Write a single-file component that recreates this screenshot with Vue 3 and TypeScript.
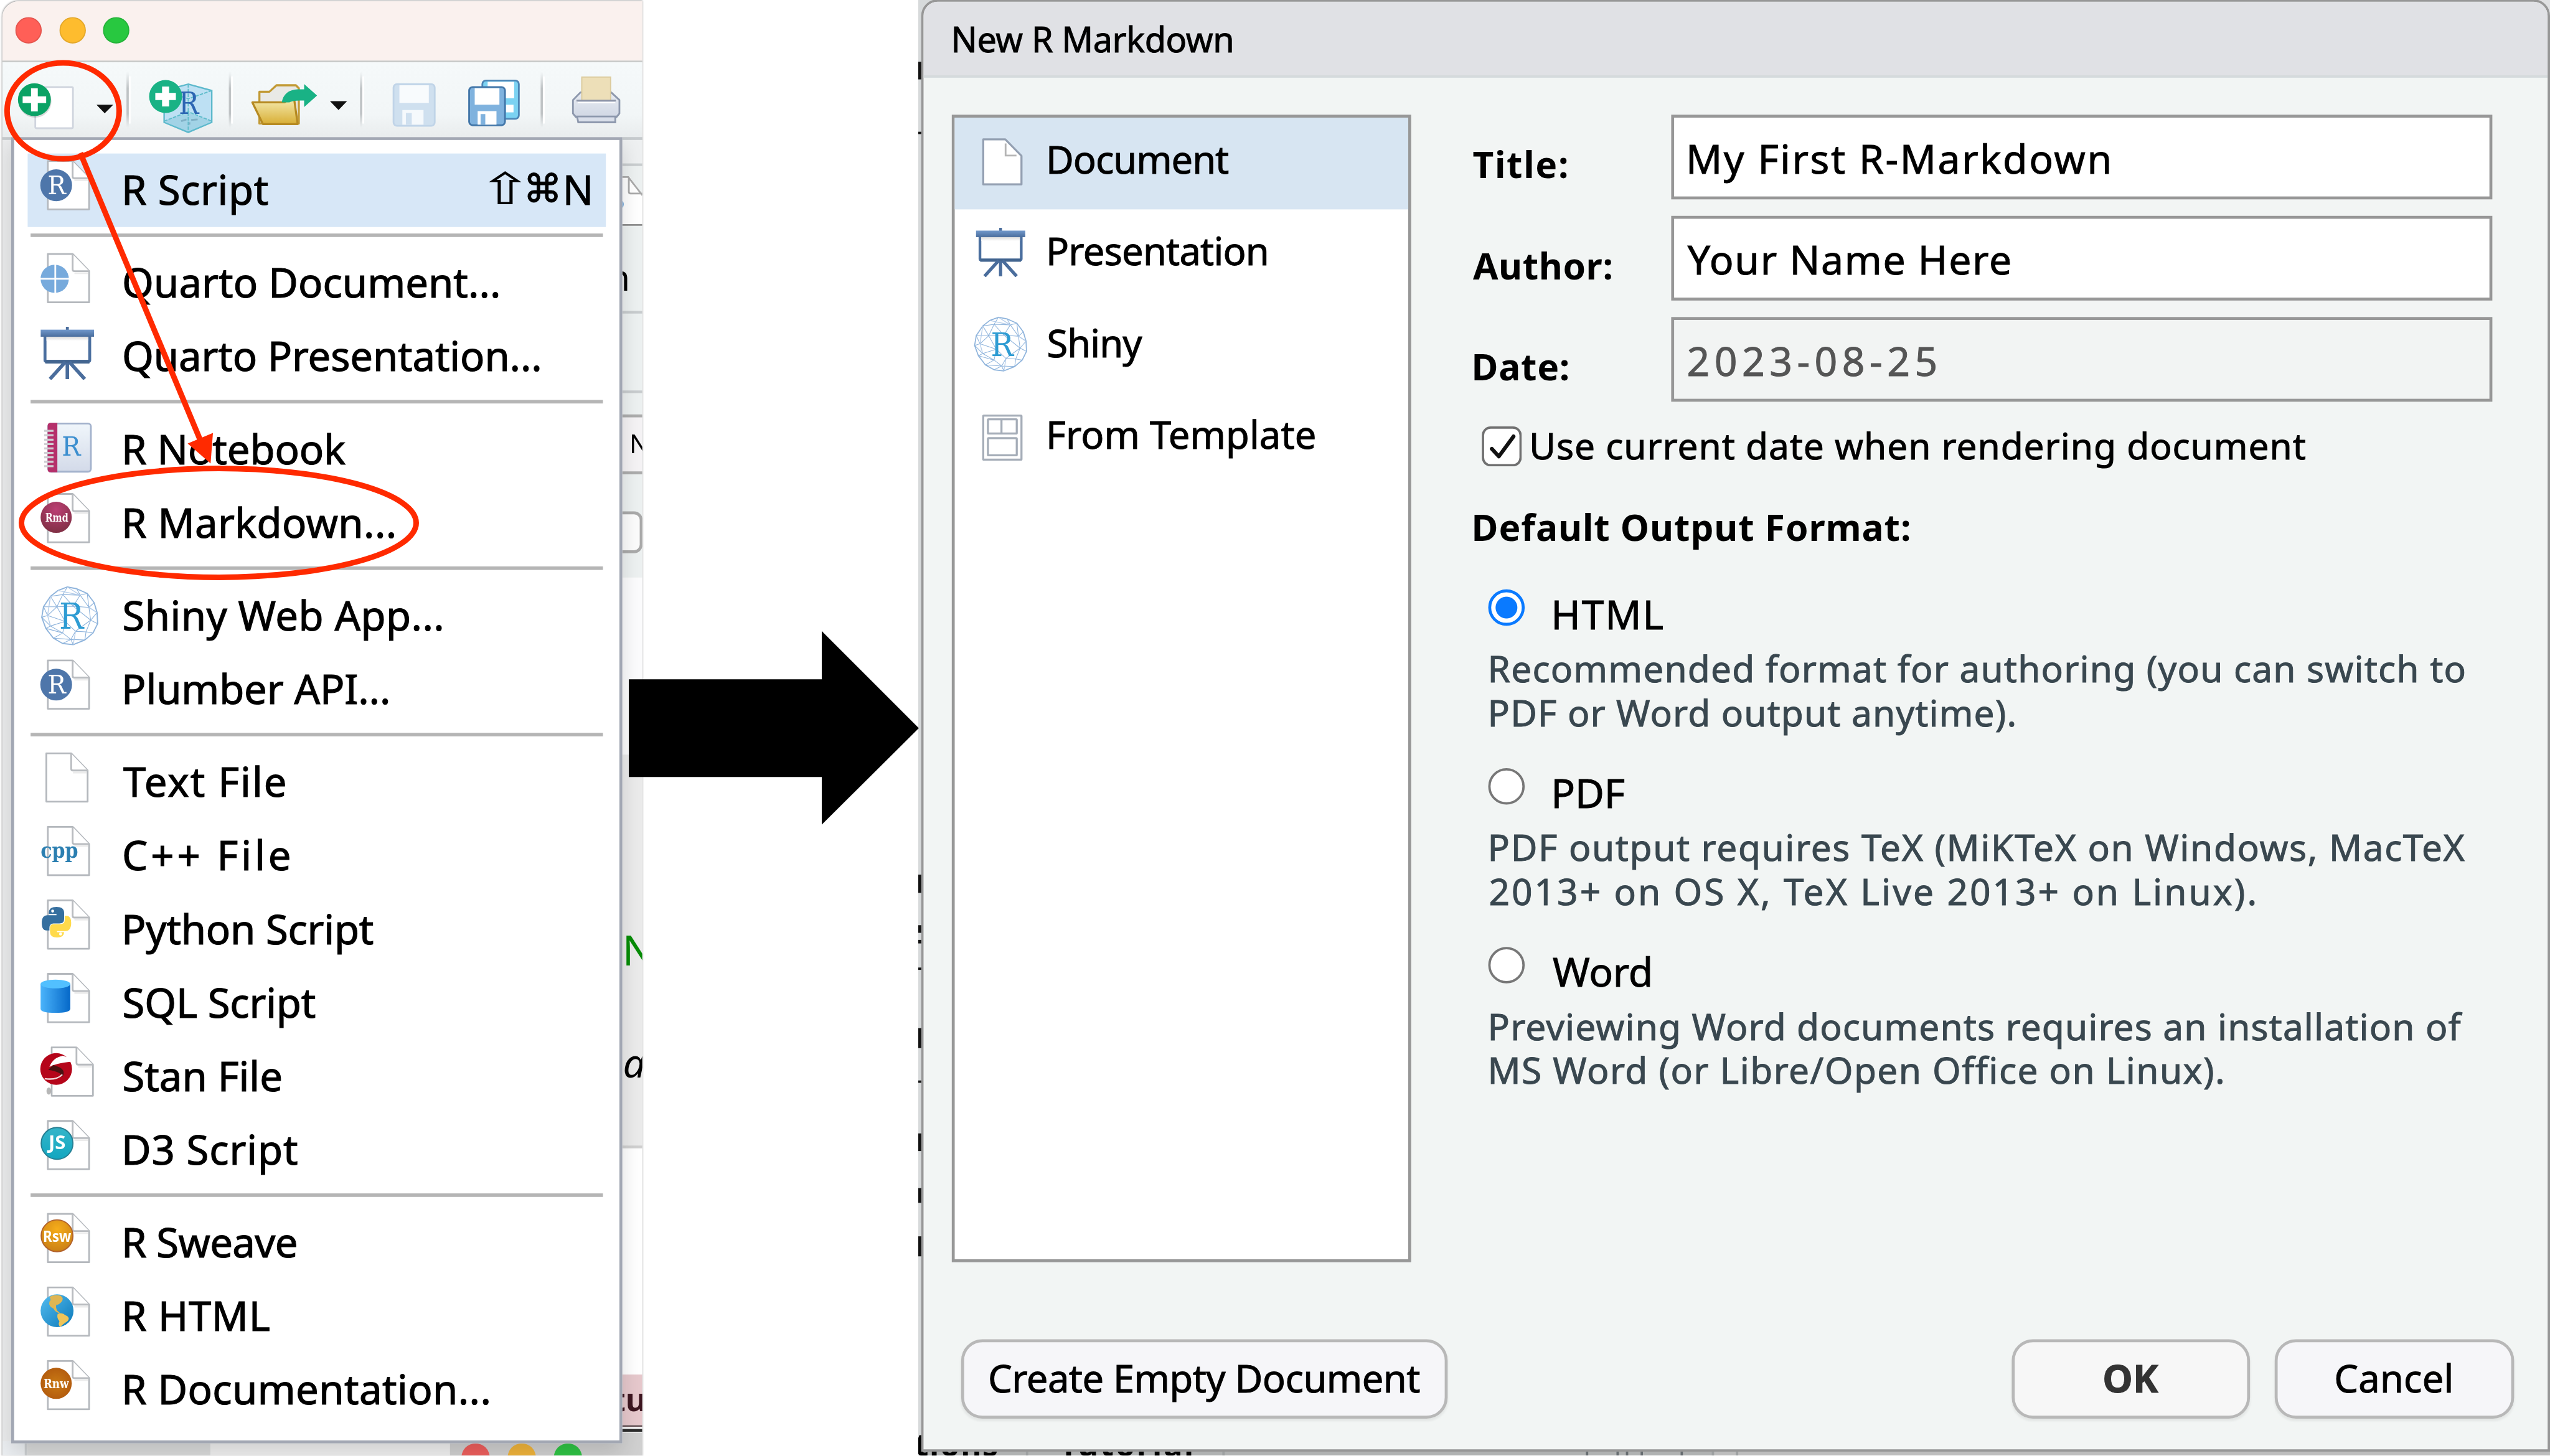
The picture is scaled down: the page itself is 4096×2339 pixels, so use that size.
<script setup lang="ts">
import type { Directive } from 'vue'

interface MenuItem {
  label: string
  icon: string
  ink: number
  keys?: boolean
}

// Spreads the letters of a label so that its visible ink spans the given width.
const vFit: Directive<HTMLElement, number> = {
  mounted(el, { value }) {
    const ctx = document.createElement('canvas').getContext('2d')
    const text = (el.textContent ?? '').trim()
    if (!ctx || text.length < 2) return
    const cs = getComputedStyle(el)
    ctx.font = `${cs.fontWeight} ${cs.fontSize} ${cs.fontFamily}`
    const m = ctx.measureText(text)
    const natural = m.actualBoundingBoxLeft + m.actualBoundingBoxRight
    el.style.letterSpacing = `${(value - natural) / (text.length - 1)}px`
    el.style.textIndent = `${m.actualBoundingBoxLeft / 2}px`
  },
}

const groups: MenuItem[][] = [
  [{ label: 'R Script', icon: 'r', ink: 243, keys: true }],
  [
    { label: 'Quarto Document...', icon: 'quarto', ink: 635.5 },
    { label: 'Quarto Presentation...', icon: 'easel', ink: 705.5 },
  ],
  [
    { label: 'R Notebook', icon: 'notebook', ink: 375 },
    { label: 'R Markdown...', icon: 'rmd', ink: 457.5 },
  ],
  [
    { label: 'Shiny Web App...', icon: 'shiny', ink: 540 },
    { label: 'Plumber API...', icon: 'r', ink: 447 },
  ],
  [
    { label: 'Text File', icon: 'text', ink: 275 },
    { label: 'C++ File', icon: 'cpp', ink: 280.5 },
    { label: 'Python Script', icon: 'python', ink: 422 },
    { label: 'SQL Script', icon: 'sql', ink: 325 },
    { label: 'Stan File', icon: 'stan', ink: 266.5 },
    { label: 'D3 Script', icon: 'd3', ink: 293 },
  ],
  [
    { label: 'R Sweave', icon: 'rsw', ink: 291 },
    { label: 'R HTML', icon: 'html', ink: 245.5 },
    { label: 'R Documentation...', icon: 'rnw', ink: 618 },
  ],
]

const templates = [
  { label: 'Document', icon: 'doc', ink: 305 },
  { label: 'Presentation', icon: 'easel', ink: 368.5 },
  { label: 'Shiny', icon: 'shiny', ink: 160 },
  { label: 'From Template', icon: 'tpl', ink: 451 },
]

const fields = [
  { label: 'Title:', ink: 159.5, value: 'My First R-Markdown', valueInk: 713, off: false },
  { label: 'Author:', ink: 235.6, value: 'Your Name Here', valueInk: 547.5, off: false },
  { label: 'Date:', ink: 159.5, value: '2023-08-25', valueInk: 420.5, off: true },
]

const formats = [
  {
    label: 'HTML', ink: 184, on: true,
    lines: [
      { t: 'Recommended format for authoring (you can switch to', w: 1654.5 },
      { t: 'PDF or Word output anytime).', w: 889.5 },
    ],
  },
  {
    label: 'PDF', ink: 118.5, on: false,
    lines: [
      { t: 'PDF output requires TeX (MiKTeX on Windows, MacTeX', w: 1655.6 },
      { t: '2013+ on OS X, TeX Live 2013+ on Linux).', w: 1300 },
    ],
  },
  {
    label: 'Word', ink: 166, on: false,
    lines: [
      { t: 'Previewing Word documents requires an installation of', w: 1651 },
      { t: 'MS Word (or Libre/Open Office on Linux).', w: 1243.5 },
    ],
  },
]

// Fragments of the window that peeks out left of the dialog: [y, height]
const peeks = [[105, 30], [224, 4], [1487, 31], [1573, 13], [1598, 6], [1645, 4], [1748, 34], [1837, 4], [1927, 30], [2020, 25], [2102, 34], [2448, 6]]
</script>

<template>
  <div class="viewport">
    <div class="canvas">
      <svg class="defs" width="0" height="0">
        <defs>
          <linearGradient id="gBar" x1="0" y1="0" x2="0" y2="1"><stop offset="0" stop-color="#7299cc" /><stop offset="1" stop-color="#4a6d9c" /></linearGradient>
          <linearGradient id="gGold" x1="0" y1="0" x2="0" y2="1"><stop offset="0" stop-color="#f5ebb0" /><stop offset="1" stop-color="#d8ae35" /></linearGradient>
          <linearGradient id="gSql" x1="0" y1="0" x2="1" y2="0"><stop offset="0" stop-color="#4bb4fb" /><stop offset="1" stop-color="#0568c8" /></linearGradient>
          <linearGradient id="gBook" x1="0" y1="0" x2="0" y2="1"><stop offset="0" stop-color="#f0f6fb" /><stop offset="1" stop-color="#d3dae9" /></linearGradient>
          <linearGradient id="gPrn" x1="0" y1="0" x2="0" y2="1"><stop offset="0" stop-color="#e8ecf2" /><stop offset="1" stop-color="#d0d7e4" /></linearGradient>
          <linearGradient id="gShade" x1="0" y1="0" x2="0" y2="1"><stop offset="0" stop-color="#d5d5d5" /><stop offset="1" stop-color="#fff" /></linearGradient>
          <linearGradient id="gSep" x1="0" y1="0" x2="0" y2="1"><stop offset="0" stop-color="#c3c7c9" stop-opacity="0" /><stop offset=".3" stop-color="#bfc3c5" /><stop offset=".75" stop-color="#bfc3c5" /><stop offset="1" stop-color="#c3c7c9" stop-opacity="0" /></linearGradient>
          <radialGradient id="gRmd" cx=".5" cy=".25" r=".8"><stop offset="0" stop-color="#bb3f74" /><stop offset="1" stop-color="#7c2e41" /></radialGradient>
          <radialGradient id="gRsw" cx=".5" cy=".3" r=".75"><stop offset="0" stop-color="#f6ad1b" /><stop offset="1" stop-color="#c87d14" /></radialGradient>
          <radialGradient id="gRnw" cx=".5" cy=".5" r=".55"><stop offset="0" stop-color="#c97a14" /><stop offset="1" stop-color="#b25a0e" /></radialGradient>
          <linearGradient id="gJs" x1="0" y1="0" x2="0" y2="1"><stop offset="0" stop-color="#35b5c9" /><stop offset="1" stop-color="#12a6c0" /></linearGradient>
          <linearGradient id="gGlobe" x1="0" y1="0" x2="1" y2="1"><stop offset="0" stop-color="#55bdf0" /><stop offset="1" stop-color="#0b78b8" /></linearGradient>
        </defs>
        <symbol id="page" viewBox="0 0 74 86">
          <path d="M1.8 1.8H44L72 31V84H1.8Z" fill="#fff" stroke="#b4b8bd" stroke-width="3" stroke-linejoin="round" />
          <path d="M44 2V28Q44 31 47 31H72" fill="#fff" stroke="#b9bcc0" stroke-width="3" />
          <path d="M47 34.5H70" stroke="#ececec" stroke-width="3" />
        </symbol>
        <symbol id="easel" viewBox="0 0 91 90">
          <path d="M45.5 0V8" stroke="#4a6d9c" stroke-width="5" />
          <rect x="7.500" y="12" width="76" height="47" rx="2" fill="#fff" stroke="#4b6f9f" stroke-width="5" />
          <rect x="10" y="16" width="71" height="8" fill="url(#gShade)" />
          <rect x="0" y="5" width="91" height="12" fill="url(#gBar)" />
          <path d="M8 59.500H83" stroke="#43658f" stroke-width="6" />
          <path d="M45.500 61V89M42 60L16 89M49 60L75 89" stroke="#4a6d9c" stroke-width="6" fill="none" />
        </symbol>
        <symbol id="shiny" viewBox="0 0 100 101">
          <g fill="none" stroke="#8fb4dc" stroke-width="1.200" stroke-linejoin="round">
            <path d="M46 1L62 4L80 12L92 28L97 45L98 64L90 80L76 92L56 100L38 98L22 89L9 72L2 53L5 35L17 17L30 7Z" stroke-width="2" />
            <path d="M46 1L38 14L17 17L28 35L5 35L12 50L2 53L17 68L9 72L38 80L22 89L52 91L38 98M38 14L68 15L62 4M68 15L80 12L83 36L92 28M83 36L97 45L86 58L98 64M86 58L78 78L90 80M78 78L76 92L52 91L56 100M38 80L52 91L60 77L78 78M17 68L38 80L42 60L12 50L28 35L38 14L56 34L68 15L83 36L56 34L28 35L42 60M56 34L86 58L60 77L42 60M17 68L42 60M83 36L86 58" />
          </g>
          <g fill="none" stroke="#b5cdea" stroke-width="1.500"><path d="M30 7L68 15M46 1L68 15M17 17L12 50L17 68M60 77L56 100M97 45L83 36" /></g>
          <text x="53" y="73" text-anchor="middle" class="slab" font-size="61" textLength="42" lengthAdjust="spacingAndGlyphs" fill="#2e9cd3">R</text>
        </symbol>
      </svg>

      <!-- IDE window -->
      <section class="ide">
        <header class="titlebar"><i class="dot red" /><i class="dot amber" /><i class="dot green" /></header>
        <div class="toolbar">
          <svg width="1088" height="127" viewBox="4 106 1088 127">
            <g fill="url(#gSep)">
              <rect x="215" y="122" width="4" height="95" /><rect x="389" y="122" width="4" height="95" />
              <rect x="612" y="122" width="4" height="95" /><rect x="919" y="122" width="4" height="95" />
            </g>
            <path d="M220.500 130V210M394.500 130V210M617.500 130V210M924.500 130V210" stroke="#fff" stroke-width="3" />
            <rect x="60" y="148" width="64" height="70" rx="2" fill="#fff" stroke="#d0d5de" stroke-width="3" />
            <circle cx="59.500" cy="172" r="28" fill="#000" opacity=".15" />
            <circle cx="58.500" cy="169.500" r="28" fill="#0aa265" />
            <path d="M58.500 150V189.500M38.500 169.500H78.500" stroke="#fff" stroke-width="11.500" />
            <path d="M164 178H192.500L178 192.500ZM561 172H590L575.500 187Z" fill="#111" />
            <path d="M320 143L360 154V208L320 225L279 208V154Z" fill="#bde0f3" />
            <path d="M320 191L360 206L320 225L279 206Z" fill="#a2d3e6" />
            <path d="M320 143L360 154V208L320 225L279 208V154Z" fill="none" stroke="#5db9cc" stroke-width="2.500" />
            <path d="M320 143V225M279 154L320 168L360 154M279 206L320 190L360 206" stroke="#5fbccb" stroke-width="2" fill="none" stroke-dasharray="6 2" />
            <text x="321" y="194" text-anchor="middle" class="slab" font-size="52" textLength="34" lengthAdjust="spacingAndGlyphs" fill="#2d66b3">R</text>
            <path d="M308 206L317 203M325 204L336 203M322 208V212" stroke="#7fb0c6" stroke-width="3" />
            <circle cx="281.500" cy="164" r="28" fill="#19b285" />
            <path d="M281.500 147V181M264 164H299" stroke="#fff" stroke-width="12" />
            <path d="M441 180V156H458L470 145H503L508 150V210H441Z" fill="#e9e9e6" stroke="#c29a35" stroke-width="3.500" stroke-linejoin="round" />
            <path d="M429 174H484L490 168H500L506 211H447Z" fill="url(#gGold)" stroke="#b68a22" stroke-width="3.500" stroke-linejoin="round" />
            <path d="M479 174Q483 153 506 152H517V143L539 162.500L517 182V171Q498 170 492 174Z" fill="#19b285" />
            <g>
              <rect x="669" y="143" width="70" height="71" rx="6" fill="#cfe0ef" stroke="#c0d4e8" stroke-width="3" />
              <rect x="679" y="145" width="50" height="30" fill="#f8fbfd" />
              <path d="M684 187H720V212H684Z" fill="#f5f9fc" /><path d="M690 192H700V212H690Z" fill="#cfe0ef" />
            </g>
            <rect x="820" y="137" width="62" height="65" rx="6" fill="#7bd2f2" stroke="#4c86b6" stroke-width="3" />
            <rect x="829" y="139" width="45" height="28" fill="#fff" /><path d="M860 178H873V191H860Z" fill="#fff" />
            <rect x="797.500" y="148" width="61" height="65" rx="6" fill="#7fb2de" stroke="#4377a9" stroke-width="3" />
            <rect x="807" y="150" width="42" height="28" fill="#fff" />
            <path d="M812 189H844V212H812Z" fill="#fff" /><path d="M817 194H825V212H817Z" fill="#7fb2de" />
            <path d="M987 157H1039L1053 170V193L1048 199H979L974 193V170Z" fill="url(#gPrn)" stroke="#8d98ad" stroke-width="3" stroke-linejoin="round" />
            <rect x="989" y="131" width="49" height="40" fill="#eddfb8" stroke="#dccb9c" stroke-width="2" />
            <path d="M980 171H1047" stroke="#8b93a6" stroke-width="3" /><path d="M982 174.500H1046" stroke="#fff" stroke-width="2" />
            <path d="M981 198H1046V208H983Z" fill="#d9dfea" stroke="#8d98ad" stroke-width="3" />
          </svg>
        </div>
        <div class="behind">
          <svg width="1088" height="2237" viewBox="4 238 1088 2237">
            <rect x="4" y="238" width="1088" height="2237" fill="#fff" />
            <rect x="4" y="238" width="38" height="2237" fill="#ebeced" />
            <rect x="1050" y="238" width="42" height="40" fill="#eef0f1" />
            <rect x="1050" y="278" width="42" height="704" fill="#edf1f1" />
            <path d="M1050 280H1092M1050 531H1092M1050 666H1092" stroke="#c9cdcf" stroke-width="4.500" />
            <path d="M1050 300H1070L1092 330V382H1050Z" fill="#fff" />
            <path d="M1050 301H1068L1092 332M1069 301V326Q1069 329 1072 329H1092" stroke="#aaa" stroke-width="3" fill="none" />
            <path d="M1050 382.500H1092" stroke="#8e8e8e" stroke-width="3" />
            <path d="M1054 338Q1066 346 1056 356Z" fill="#7db0e0" />
            <rect x="1050" y="707" width="42" height="96" fill="#f5f3f5" />
            <path d="M1050 707H1092M1050 804H1092" stroke="#adadad" stroke-width="5" />
            <rect x="1040" y="872" width="50" height="66" rx="12" fill="#fcfcfc" stroke="#aaa" stroke-width="5" />
            <rect x="1050" y="982" width="42" height="301" fill="#fcfcfd" />
            <rect x="1050" y="1283" width="42" height="667" fill="#ebebeb" />
            <path d="M1050 1950H1092" stroke="#d0d0d0" stroke-width="5" />
            <text x="1033" y="494" class="ui" font-size="62">n</text>
            <text x="1070" y="771" class="ui" font-size="44">N</text>
            <text x="1058" y="1642" class="ui" font-size="71" fill="#078c07">N</text>
            <text x="1059" y="1832" class="ui it" font-size="68">a</text>
            <rect x="1050" y="2337" width="42" height="86" fill="#e6c8cc" />
            <text x="1040" y="2399" class="ui b" font-size="54" fill="#3d1620">tu</text>
            <path d="M1050 2424.500H1092" stroke="#685357" stroke-width="3" /><path d="M1050 2432H1092" stroke="#2c2c2c" stroke-width="5" />
            <rect x="4" y="2450" width="38" height="25" fill="#eceff2" />
            <path d="M44 2450V2475" stroke="#cdd0d2" stroke-width="4" />
            <rect x="46" y="2450" width="312" height="25" fill="#dadbdb" />
            <rect x="358" y="2450" width="408" height="25" fill="#f0f0f0" />
            <rect x="765" y="2436" width="327" height="39" fill="#d0d0d0" />
            <circle cx="808.500" cy="2478" r="24" fill="#ee5f5d" /><circle cx="887" cy="2478" r="24" fill="#f0b43c" /><circle cx="965.500" cy="2478" r="24" fill="#2fc445" />
          </svg>
        </div>
      </section>

      <!-- New file menu -->
      <nav class="menu">
        <div v-for="(g, gi) in groups" :key="gi" class="group">
          <div v-for="it in g" :key="it.label" class="item" :class="{ active: it.keys }">
            <svg width="110" height="125" viewBox="64 0 110 125">
              <use v-if="!['easel', 'notebook', 'shiny'].includes(it.icon)" href="#page" :x="it.icon === 'stan' ? 86 : it.icon === 'text' ? 77 : 79.5" y="11" width="74" height="86" />
              <g v-if="it.icon === 'r'">
                <circle cx="95.500" cy="54" r="27" fill="#4e76aa" />
                <text x="96.500" y="69" text-anchor="middle" class="slab" font-size="44" textLength="31" lengthAdjust="spacingAndGlyphs" fill="#fff">R</text>
              </g>
              <g v-else-if="it.icon === 'quarto'">
                <circle cx="93" cy="55" r="24" fill="#77aadc" /><path d="M94 30V80M68 55H118" stroke="#fff" stroke-width="3" />
              </g>
              <use v-else-if="it.icon === 'easel'" href="#easel" x="69" y="11.500" width="91" height="90" />
              <g v-else-if="it.icon === 'notebook'">
                <rect x="82" y="18" width="72.500" height="82" rx="5" fill="url(#gBook)" stroke="#a3b2cc" stroke-width="3" />
                <path d="M86 17H97.500V101H86Q81 101 81 96V22Q81 17 86 17Z" fill="#b5306b" />
                <path v-for="n in 9" :key="n" :d="`M75 ${23 + n * 7.5}H91`" stroke="#cfcdd2" stroke-width="3.500" />
                <text x="121" y="73" text-anchor="middle" class="slab" font-size="46" textLength="32" lengthAdjust="spacingAndGlyphs" fill="#3d8fcf">R</text>
              </g>
              <g v-else-if="it.icon === 'rmd'">
                <circle cx="95.500" cy="52.500" r="26.500" fill="url(#gRmd)" />
                <text x="96.500" y="60" text-anchor="middle" class="slab b" font-size="19" textLength="39" lengthAdjust="spacingAndGlyphs" fill="#fff">Rmd</text>
              </g>
              <use v-else-if="it.icon === 'shiny'" href="#shiny" x="69" y="11.500" width="99" height="101" />
              <text v-else-if="it.icon === 'cpp'" x="69" y="65" class="slab b" font-size="37" textLength="64" lengthAdjust="spacingAndGlyphs" fill="#2b7fb1">cpp</text>
              <g v-else-if="it.icon === 'python'">
                <path d="M83 34Q83 24 96 24Q109 24 109 34V45Q109 52 101 52H91Q84 52 84 60V64H79Q71 64 71 51Q71 38 81 38H96V36H83Z" fill="#356f9f" />
                <path d="M109 67Q109 76 97 76Q85 76 85 67V59Q85 53 92 53H103Q110 53 110 46V39H114Q121 40 121 51Q121 65 111 65H97V67Z" fill="#ffda4b" />
                <circle cx="89.500" cy="31" r="2.500" fill="#fff" /><circle cx="103" cy="70" r="2.500" fill="#fff" />
              </g>
              <g v-else-if="it.icon === 'sql'">
                <path d="M69 30V72Q69 79 94 79Q119.500 79 119.500 72V30Z" fill="url(#gSql)" />
                <ellipse cx="94.250" cy="30" rx="25.250" ry="7.500" fill="#52c0ff" />
              </g>
              <g v-else-if="it.icon === 'stan'">
                <ellipse cx="83" cy="87" rx="4" ry="6" fill="#999" opacity=".7" />
                <circle cx="95.500" cy="49.500" r="27" fill="#b5051a" />
                <path d="M107 27Q90 30 84 46Q94 40 121.500 37L116 30Z" fill="#fff" />
                <path d="M82 51Q104 54 106 63Q112 53 102 47Q94 43 90 43Z" fill="#4a1212" />
                <path d="M76 66Q96 69 106 59" stroke="#f3d9dc" stroke-width="2.500" fill="none" />
              </g>
              <g v-else-if="it.icon === 'd3'">
                <circle cx="97" cy="51" r="27" fill="url(#gJs)" stroke="#277f93" stroke-width="2" />
                <text x="97" y="61" text-anchor="middle" class="ui b" font-size="33" fill="#fff">JS</text>
              </g>
              <g v-else-if="it.icon === 'rsw'">
                <circle cx="97" cy="50" r="27" fill="url(#gRsw)" stroke="#b2622c" stroke-width="2" />
                <text x="97" y="60" text-anchor="middle" class="ui b" font-size="26" textLength="48" lengthAdjust="spacingAndGlyphs" fill="#fff">Rsw</text>
              </g>
              <g v-else-if="it.icon === 'html'">
                <circle cx="97" cy="52.500" r="28" fill="url(#gGlobe)" />
                <path d="M84 29Q92 24 103 27Q110 32 104 38Q99 43 96 42Q94 46 97 52Q100 55 103 57Q94 56 91 49Q82 45 84 37Q88 34 84 29Z" fill="#e0b653" />
                <path d="M98 58Q106 55 111 60Q121 64 114 71Q106 76 103 80Q98 78 101 70Q96 65 98 58Z" fill="#f0c458" />
              </g>
              <g v-else-if="it.icon === 'rnw'">
                <circle cx="95.500" cy="51" r="26.500" fill="url(#gRnw)" />
                <text x="95.500" y="59" text-anchor="middle" class="slab b" font-size="22" textLength="43" lengthAdjust="spacingAndGlyphs" fill="#fff">Rnw</text>
              </g>
            </svg>
            <span v-fit="it.ink" class="mlabel">{{ it.label }}</span>
            <span v-if="it.keys" class="keys"><span class="shift">⇧</span><span class="cmd">⌘</span><span>N</span></span>
          </div>
        </div>
      </nav>

      <!-- Window behind the dialog -->
      <svg class="under" width="2774" height="2475" viewBox="1561 0 2774 2475">
        <rect x="1561" y="0" width="30" height="2475" fill="#d7dadb" />
        <rect v-for="p in peeks" :key="p[0]" x="1561" :y="p[0]" width="8" :height="p[1]" fill="#111" />
        <rect x="4300" y="0" width="35" height="40" fill="#dfe0e2" />
        <rect x="1566" y="2440" width="1347" height="35" fill="#b0b2b2" />
        <rect x="2912" y="2440" width="1423" height="35" fill="#bdbdbd" />
        <path d="M1746 2460V2475M2080 2460V2475M2912 2460V2475M2953 2460V2475" stroke="#9da0a1" stroke-width="4" />
        <path d="M2698 2460V2475M2750 2460V2475M2766 2460V2475M2791 2460V2475M2859 2460V2475" stroke="#666c70" stroke-width="4" />
        <text x="1555" y="2476" class="ui b" font-size="54" textLength="142">tions</text>
        <text x="1801" y="2476" class="ui b" font-size="54" textLength="228">Tutorial</text>
      </svg>

      <!-- Dialog -->
      <section class="dialog">
        <header class="dhead"><span v-fit="472.5">New R Markdown</span></header>
        <div class="dbody">
          <ul class="list">
            <li v-for="(t, i) in templates" :key="t.label" :class="{ sel: i === 0 }">
              <svg width="100" height="156" viewBox="1650 0 100 156">
                <g v-if="t.icon === 'doc'">
                  <path d="M1671.500 37H1709L1736.500 65V113.500H1671.500Z" fill="#fff" stroke="#94a0b2" stroke-width="3.500" stroke-linejoin="round" />
                  <path d="M1709.500 44V64.500H1728" fill="none" stroke="#b5b5b5" stroke-width="3" />
                </g>
                <use v-else-if="t.icon === 'easel'" href="#easel" x="1659" y="31" width="84" height="84" />
                <use v-else-if="t.icon === 'shiny'" href="#shiny" x="1655" y="26" width="92" height="94" />
                <g v-else fill="none" stroke="#a5adb8" stroke-width="3.500">
                  <rect x="1671.500" y="38.500" width="65" height="75" rx="1" /><rect x="1679.500" y="45" width="49" height="24" rx="1" />
                  <path d="M1702.500 45V69" /><rect x="1679.500" y="77" width="49" height="29" rx="1" />
                </g>
              </svg>
              <span v-fit="t.ink">{{ t.label }}</span>
            </li>
          </ul>
          <div class="form">
            <div v-for="f in fields" :key="f.label" class="field">
              <label v-fit="f.ink">{{ f.label }}</label>
              <div class="input" :class="{ off: f.off }"><span v-fit="f.valueInk">{{ f.value }}</span></div>
            </div>
            <div class="check">
              <svg width="68" height="68" viewBox="0 0 68 68">
                <rect x="2" y="2" width="64" height="64" rx="13" fill="#fff" stroke="#707070" stroke-width="4" />
                <path d="M17 38L29 51L54 17" fill="none" stroke="#111" stroke-width="6.500" stroke-linecap="round" stroke-linejoin="round" />
              </svg>
              <span v-fit="1315">Use current date when rendering document</span>
            </div>
            <h2 v-fit="739.6">Default Output Format:</h2>
            <div v-for="o in formats" :key="o.label" class="option">
              <div class="radio-row">
                <i class="radio" :class="{ on: o.on }" />
                <span v-fit="o.ink">{{ o.label }}</span>
              </div>
              <p v-for="l in o.lines" :key="l.t"><span v-fit="l.w">{{ l.t }}</span></p>
            </div>
          </div>
        </div>
        <footer class="dfoot">
          <button class="create"><span v-fit="731.5">Create Empty Document</span></button>
          <button class="ok"><span v-fit="92.5">OK</span></button>
          <button class="cancel"><span v-fit="195.5">Cancel</span></button>
        </footer>
      </section>

      <!-- Annotations -->
      <svg class="notes" width="4335" height="2475" viewBox="0 0 4335 2475">
        <path d="M1069 1155H1397V1073L1562 1238L1397 1402V1321H1069Z" fill="#000" />
        <g fill="none" stroke="#ff2a00" stroke-width="9.500">
          <ellipse cx="107.300" cy="188.500" rx="95.300" ry="81.500" />
          <ellipse cx="372" cy="889" rx="335.500" ry="92.500" />
          <path d="M136.500 260L342 752" />
        </g>
        <path d="M319 754L362 736L358 788Z" fill="#ff2a00" />
      </svg>
    </div>
  </div>
</template>

<style>
body {
  margin: 0;
  overflow: hidden;
}
</style>

<style scoped>
.viewport {
  width: 4096px;
  height: 2339px;
  overflow: hidden;
  background: #fff;
}
.canvas {
  position: relative;
  width: 4335px;
  height: 2475px;
  transform: scale(0.94487);
  transform-origin: 0 0;
  overflow: hidden;
  font-family: "Noto Sans", "Open Sans", sans-serif;
  color: #000;
}
.canvas * {
  box-sizing: border-box;
}
svg {
  display: block;
  flex: none;
}
.defs {
  position: absolute;
}
.ui {
  font-family: "Noto Sans", sans-serif;
}
.slab {
  font-family: "DejaVu Serif", "Liberation Serif", serif;
}
.b {
  font-weight: 700;
}
.it {
  font-style: italic;
}
.ide {
  position: absolute;
  left: 4px;
  top: 2px;
  width: 1088px;
  height: 2473px;
  border-radius: 28px 0 0 0;
  overflow: hidden;
  box-shadow: 0 0 3px #999;
}
.titlebar {
  height: 104px;
  display: flex;
  align-items: center;
  gap: 29.500px;
  padding: 0 0 3px 22px;
  background: #faf1ee;
  border-bottom: 3px solid #c9cac9;
}
.dot {
  width: 45px;
  height: 45px;
  border-radius: 50%;
  border: 2px solid rgba(0, 0, 0, 0.1);
}
.red { background: #ff5f57; }
.amber { background: #febc2e; }
.green { background: #28c840; }
.toolbar {
  height: 132px;
  background: linear-gradient(#f5f9fa 0%, #f2f6f7 70%, #e9eced 100%);
  border-bottom: 5px solid #c6cacd;
}
.menu {
  position: absolute;
  left: 19px;
  top: 233px;
  width: 1039px;
  height: 2221px;
  padding: 23px;
  background: #fff;
  border: 5px solid #a2a7b3;
  box-shadow: 0 14px 34px rgba(0, 0, 0, 0.14);
  clip-path: inset(0 -34px -30px -15px);
  -webkit-text-stroke: 1.2px currentColor;
}
.menu svg {
  -webkit-text-stroke: 0;
}
.group + .group::before {
  content: "";
  display: block;
  height: 5.500px;
  margin: 11px 5px 16.500px;
  background: #b5b5b5;
}
.item {
  display: flex;
  align-items: center;
  height: 125px;
  padding-left: 17px;
}
.active {
  background: #d7e7f7;
}
.mlabel {
  margin-left: 35.500px;
  padding-bottom: 5px;
  font-size: 69px;
  white-space: nowrap;
}
.keys {
  display: flex;
  align-items: center;
  margin-left: auto;
  padding: 0 21px 5px 0;
  font-size: 69px;
}
.shift {
  font-family: "DejaVu Sans", sans-serif;
  font-size: 74px;
  transform: scaleX(1.5);
  -webkit-text-stroke: 0;
}
.cmd {
  font-family: "DejaVu Sans", sans-serif;
  font-size: 66px;
  margin-right: 1px;
}
.under {
  position: absolute;
  left: 1561px;
  top: 0;
}
.dialog {
  position: absolute;
  left: 1566px;
  top: -1px;
  width: 2769px;
  height: 2469px;
  border: 4px solid #979797;
  border-radius: 28px 28px 0 0;
  background: #f2f5f4;
  overflow: hidden;
  -webkit-text-stroke: 1px currentColor;
}
.dialog svg {
  -webkit-text-stroke: 0;
}
.dhead {
  display: flex;
  align-items: center;
  height: 129px;
  padding-left: 49px;
  background: #e0e1e5;
  border-bottom: 4px solid #d5dadc;
  font-size: 59px;
  white-space: nowrap;
}
.dbody {
  display: flex;
  padding: 62.500px 0 0 48px;
}
.list {
  flex: none;
  width: 781px;
  height: 1951.500px;
  margin: 0;
  padding: 0;
  list-style: none;
  background: #fff;
  border: 5px solid #979797;
}
.list li {
  display: flex;
  align-items: center;
  height: 156px;
  padding-left: 27px;
  font-size: 65px;
  white-space: nowrap;
}
.list li span {
  margin: -15px 0 0 31px;
}
.sel {
  background: #d7e5f2;
}
.form {
  width: 1733px;
  margin-left: 105px;
}
.field {
  display: flex;
  height: 144px;
  margin-bottom: 28px;
}
.field label {
  width: 337px;
  padding-top: 25px;
  line-height: 119px;
  font-size: 62px;
  font-weight: 700;
  -webkit-text-stroke: 0;
}
.input {
  flex: 1;
  display: flex;
  align-items: center;
  padding: 3px 0 0 23px;
  background: #fff;
  border: 5px solid #979797;
  font-size: 68px;
  white-space: nowrap;
}
.off {
  background: #f2f4f3;
  color: #555;
}
.check {
  display: flex;
  align-items: center;
  gap: 15.500px;
  height: 68px;
  margin-top: 42.500px;
  padding-left: 14.500px;
  font-size: 62px;
  white-space: nowrap;
}
.check span {
  margin-top: -5px;
}
h2 {
  margin: 63px 0 66px 0;
  font-size: 62px;
  line-height: 80px;
  white-space: nowrap;
  -webkit-text-stroke: 0;
}
.option {
  margin-bottom: 57.500px;
}
.radio-row {
  display: flex;
  align-items: center;
  height: 62px;
  margin-bottom: 34.500px;
  padding-left: 25.500px;
  font-size: 68px;
}
.radio-row span {
  margin: 21px 0 0 48px;
}
.radio {
  width: 62px;
  height: 62px;
  border: 4px solid #777;
  border-radius: 50%;
  background: #fff;
}
.radio.on {
  border: 5px solid #0a7aff;
  background: radial-gradient(circle, #0a7aff 18px, #fff 19px);
}
.option p {
  margin: 0 0 0 28px;
  font-size: 62px;
  line-height: 75px;
  color: #39474f;
  white-space: nowrap;
}
.option p span {
  display: block;
}
.dfoot {
  display: flex;
  margin-top: 131px;
  padding: 0 57px 0 64px;
}
button {
  height: 135px;
  display: flex;
  align-items: center;
  justify-content: center;
  padding: 0 0 3px;
  border: 5px solid #b8b8b8;
  border-radius: 36px;
  background: #f6f6f9;
  font: 65px "Noto Sans", sans-serif;
  color: #000;
  box-shadow: 0 4px 4px rgba(0, 0, 0, 0.06);
  white-space: nowrap;
}
.create {
  width: 827px;
}
.ok {
  width: 405px;
  margin: 0 42px 0 auto;
  background: #f7f7f7;
  color: #333;
  font-weight: 700;
}
.cancel {
  width: 407px;
}
.notes {
  position: absolute;
  left: 0;
  top: 0;
}
</style>
